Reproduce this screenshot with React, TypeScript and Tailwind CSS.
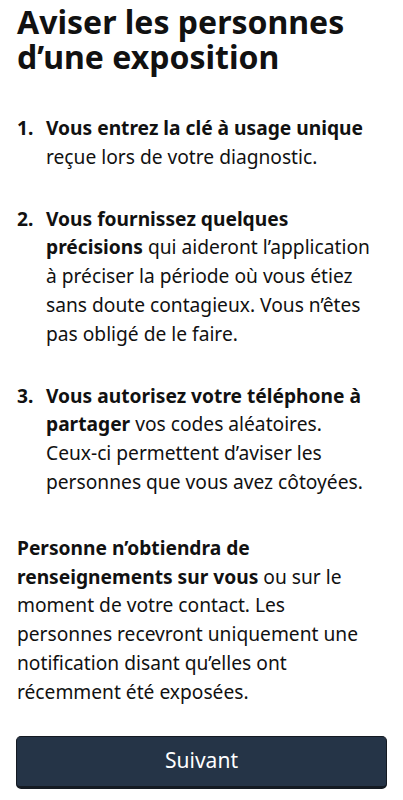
const steps = [
  {
    bold: "Vous entrez la clé à usage unique",
    rest: " reçue lors de votre diagnostic.",
  },
  {
    bold: "Vous fournissez quelques précisions",
    rest: " qui aideront l’application à préciser la période où vous étiez sans doute contagieux. Vous n’êtes pas obligé de le faire.",
  },
  {
    bold: "Vous autorisez votre téléphone à partager",
    rest: " vos codes aléatoires. Ceux-ci permettent d’aviser les personnes que vous avez côtoyées.",
  },
];

export default function App() {
  return (
    <div className="flex min-h-[800px] flex-col bg-white px-[17px] pt-[4px] font-['Noto_Sans',sans-serif] text-[#111111]">
      <h1 className="pr-[13px] text-[32px] font-bold leading-[35px]">
        Aviser les personnes d’une exposition
      </h1>

      <ol className="mt-[40px] flex flex-col gap-[33px] pr-[13px] text-[19.2px] leading-[28.8px]">
        {steps.map((step, i) => (
          <li key={i} className="flex">
            <span className="w-[29px] shrink-0 font-bold">{i + 1}.</span>
            <p>
              <strong className="font-bold">{step.bold}</strong>
              {step.rest}
            </p>
          </li>
        ))}
      </ol>

      <p className="mt-[37px] pr-[13px] text-[19.2px] leading-[28.8px]">
        <strong className="font-bold">
          Personne n’obtiendra de renseignements sur vous
        </strong>{" "}
        ou sur le moment de votre contact. Les personnes recevront uniquement
        une notification disant qu’elles ont récemment été exposées.
      </p>

      <button className="mt-[29px] ml-[-1px] h-[53px] w-[371px] rounded-[5px] border border-b-[3px] border-[#141a22] bg-[#253447] text-[21px] text-white">
        Suivant
      </button>
    </div>
  );
}
